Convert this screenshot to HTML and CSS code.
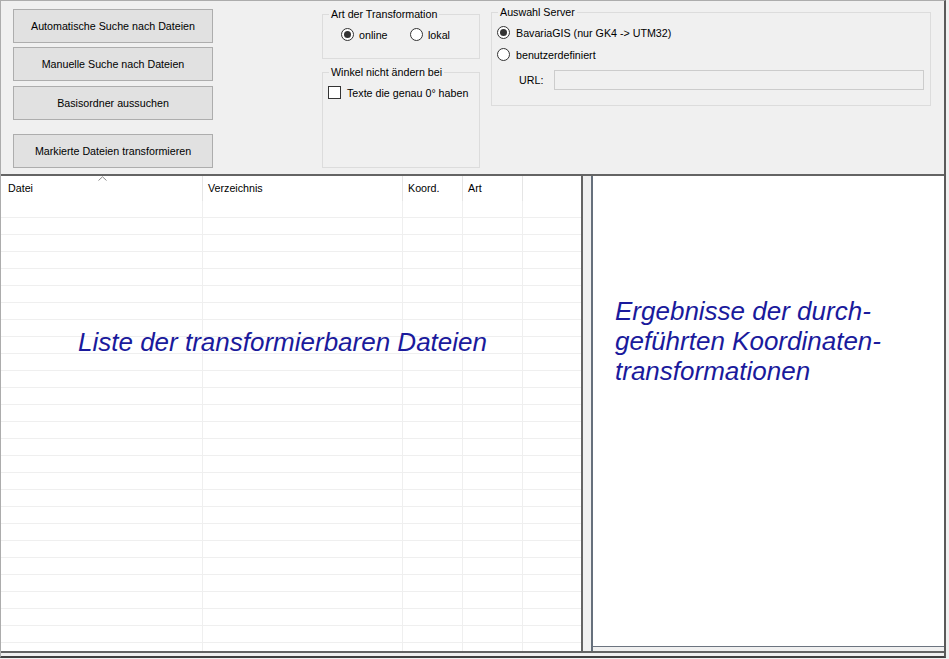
FILE: index.html
```html
<!DOCTYPE html>
<html lang="de">
<head>
<meta charset="utf-8">
<title>Koordinatentransformation</title>
<link rel="stylesheet" href="styles.css">
</head>
<body>
<div class="window">
  <div class="toolbar">
    <div class="buttons">
      <button class="btn">Automatische Suche nach Dateien</button>
      <button class="btn">Manuelle Suche nach Dateien</button>
      <button class="btn">Basisordner aussuchen</button>
      <button class="btn btn-gap">Markierte Dateien transformieren</button>
    </div>
    <div class="middle">
      <fieldset class="group group-art">
        <legend>Art der Transformation</legend>
        <div class="radio-row art-row">
          <span class="opt opt-online"><span class="radio checked"></span><span>online</span></span>
          <span class="opt"><span class="radio"></span><span>lokal</span></span>
        </div>
      </fieldset>
      <fieldset class="group group-winkel">
        <legend>Winkel nicht ändern bei</legend>
        <div class="check-row">
          <span class="checkbox"></span><span>Texte die genau 0° haben</span>
        </div>
      </fieldset>
    </div>
    <fieldset class="group group-server">
      <legend>Auswahl Server</legend>
      <div class="server-row first"><span class="radio checked"></span><span>BavariaGIS (nur GK4 -&gt; UTM32)</span></div>
      <div class="server-row second"><span class="radio"></span><span>benutzerdefiniert</span></div>
      <div class="url-row"><span class="url-label">URL:</span><span class="url-box"></span></div>
    </fieldset>
  </div>

  <div class="main">
    <div class="list">
      <div class="list-head">
        <div class="cell c1">Datei<svg class="sort" width="9" height="5" viewBox="0 0 9 5"><polyline points="0.5,4.5 4.5,0.8 8.5,4.5" fill="none" stroke="#8a8a8a" stroke-width="1"/></svg></div>
        <div class="cell c2">Verzeichnis</div>
        <div class="cell c3">Koord.</div>
        <div class="cell c4">Art</div>
        <div class="cell c5"></div>
      </div>
      <div class="list-body">
        <div class="row"><div class="cell c1"></div><div class="cell c2"></div><div class="cell c3"></div><div class="cell c4"></div><div class="cell c5"></div></div>
        <div class="row"><div class="cell c1"></div><div class="cell c2"></div><div class="cell c3"></div><div class="cell c4"></div><div class="cell c5"></div></div>
        <div class="row"><div class="cell c1"></div><div class="cell c2"></div><div class="cell c3"></div><div class="cell c4"></div><div class="cell c5"></div></div>
        <div class="row"><div class="cell c1"></div><div class="cell c2"></div><div class="cell c3"></div><div class="cell c4"></div><div class="cell c5"></div></div>
        <div class="row"><div class="cell c1"></div><div class="cell c2"></div><div class="cell c3"></div><div class="cell c4"></div><div class="cell c5"></div></div>
        <div class="row"><div class="cell c1"></div><div class="cell c2"></div><div class="cell c3"></div><div class="cell c4"></div><div class="cell c5"></div></div>
        <div class="row"><div class="cell c1"></div><div class="cell c2"></div><div class="cell c3"></div><div class="cell c4"></div><div class="cell c5"></div></div>
        <div class="row"><div class="cell c1"></div><div class="cell c2"></div><div class="cell c3"></div><div class="cell c4"></div><div class="cell c5"></div></div>
        <div class="row"><div class="cell c1"></div><div class="cell c2"></div><div class="cell c3"></div><div class="cell c4"></div><div class="cell c5"></div></div>
        <div class="row"><div class="cell c1"></div><div class="cell c2"></div><div class="cell c3"></div><div class="cell c4"></div><div class="cell c5"></div></div>
        <div class="row"><div class="cell c1"></div><div class="cell c2"></div><div class="cell c3"></div><div class="cell c4"></div><div class="cell c5"></div></div>
        <div class="row"><div class="cell c1"></div><div class="cell c2"></div><div class="cell c3"></div><div class="cell c4"></div><div class="cell c5"></div></div>
        <div class="row"><div class="cell c1"></div><div class="cell c2"></div><div class="cell c3"></div><div class="cell c4"></div><div class="cell c5"></div></div>
        <div class="row"><div class="cell c1"></div><div class="cell c2"></div><div class="cell c3"></div><div class="cell c4"></div><div class="cell c5"></div></div>
        <div class="row"><div class="cell c1"></div><div class="cell c2"></div><div class="cell c3"></div><div class="cell c4"></div><div class="cell c5"></div></div>
        <div class="row"><div class="cell c1"></div><div class="cell c2"></div><div class="cell c3"></div><div class="cell c4"></div><div class="cell c5"></div></div>
        <div class="row"><div class="cell c1"></div><div class="cell c2"></div><div class="cell c3"></div><div class="cell c4"></div><div class="cell c5"></div></div>
        <div class="row"><div class="cell c1"></div><div class="cell c2"></div><div class="cell c3"></div><div class="cell c4"></div><div class="cell c5"></div></div>
        <div class="row"><div class="cell c1"></div><div class="cell c2"></div><div class="cell c3"></div><div class="cell c4"></div><div class="cell c5"></div></div>
        <div class="row"><div class="cell c1"></div><div class="cell c2"></div><div class="cell c3"></div><div class="cell c4"></div><div class="cell c5"></div></div>
        <div class="row"><div class="cell c1"></div><div class="cell c2"></div><div class="cell c3"></div><div class="cell c4"></div><div class="cell c5"></div></div>
        <div class="row"><div class="cell c1"></div><div class="cell c2"></div><div class="cell c3"></div><div class="cell c4"></div><div class="cell c5"></div></div>
        <div class="row"><div class="cell c1"></div><div class="cell c2"></div><div class="cell c3"></div><div class="cell c4"></div><div class="cell c5"></div></div>
        <div class="row"><div class="cell c1"></div><div class="cell c2"></div><div class="cell c3"></div><div class="cell c4"></div><div class="cell c5"></div></div>
        <div class="row"><div class="cell c1"></div><div class="cell c2"></div><div class="cell c3"></div><div class="cell c4"></div><div class="cell c5"></div></div>
        <div class="row"><div class="cell c1"></div><div class="cell c2"></div><div class="cell c3"></div><div class="cell c4"></div><div class="cell c5"></div></div>
        <div class="row"><div class="cell c1"></div><div class="cell c2"></div><div class="cell c3"></div><div class="cell c4"></div><div class="cell c5"></div></div>
      </div>
      <div class="list-label">Liste der transformierbaren Dateien</div>
    </div>
    <div class="result">
      <div class="result-area">
        <div class="result-text">Ergebnisse der durch-<br>geführten Koordinaten-<br>transformationen</div>
      </div>
      <div class="result-foot"></div>
    </div>
  </div>
</div>
</body>
</html>
```

FILE: styles.css
```css
html, body {
  margin: 0;
  padding: 0;
}
body {
  width: 949px;
  height: 659px;
  overflow: hidden;
  background: #f0f0f0;
  font-family: "Liberation Sans", Arial, sans-serif;
  font-size: 10.7px;
  color: #000;
}
.window {
  box-sizing: border-box;
  width: 946px;
  height: 658px;
  border-top: 1px solid #acacac;
  border-left: 1px solid #acacac;
  border-right: 2px solid #5a5a5a;
  border-bottom: 2px solid #404040;
  background: #f0f0f0;
  display: flex;
  flex-direction: column;
}

/* ---------- top area ---------- */
.toolbar {
  height: 173px;
  display: flex;
  align-items: flex-start;
}
.buttons {
  margin-left: 12px;
  margin-top: 8px;
  width: 200px;
  display: flex;
  flex-direction: column;
}
.btn {
  box-sizing: border-box;
  width: 200px;
  height: 34px;
  margin: 0 0 4px 0;
  padding: 0;
  border: 1px solid #adadad;
  background: #e1e1e1;
  font-family: "Liberation Sans", Arial, sans-serif;
  font-size: 10.7px;
  color: #000;
  text-align: center;
}
.btn:nth-child(3) { margin-top: 1px; }
.btn-gap { margin-top: 10px; }

.middle {
  margin-left: 109px;
  margin-top: 7px;
  width: 158px;
  display: flex;
  flex-direction: column;
}
.group {
  box-sizing: border-box;
  margin: 0;
  padding: 0;
  min-width: 0;
  border: 1px solid #dcdcdc;
}
.group legend {
  margin-left: 6px;
  padding: 0 2px;
  font-size: 10.7px;
  line-height: 13px;
}
.group-art {
  width: 158px;
  height: 51px;
}
.group-winkel {
  width: 158px;
  height: 102px;
  margin-top: 7px;
}
.group-server {
  margin-left: 11px;
  margin-top: 5px;
  width: 440px;
  height: 100px;
}

.radio {
  box-sizing: border-box;
  flex: none;
  width: 13px;
  height: 13px;
  border: 1px solid #333;
  border-radius: 50%;
  background: #fff;
  display: flex;
  align-items: center;
  justify-content: center;
}
.radio.checked::after {
  content: "";
  width: 7px;
  height: 7px;
  border-radius: 50%;
  background: #333;
}
.checkbox {
  box-sizing: border-box;
  flex: none;
  width: 13px;
  height: 13px;
  border: 1px solid #333;
  background: #fff;
}

.art-row {
  margin-top: 7px;
  padding-left: 18px;
  display: flex;
  align-items: center;
  height: 13px;
}
.opt {
  display: inline-flex;
  align-items: center;
  gap: 5px;
}
.opt-online { width: 69px; }

.check-row {
  margin-top: 7px;
  padding-left: 5px;
  display: flex;
  align-items: center;
  gap: 6px;
  height: 13px;
}

.server-row {
  padding-left: 5px;
  display: flex;
  align-items: center;
  gap: 6px;
  height: 13px;
}
.server-row.first { margin-top: 7px; }
.server-row.second { margin-top: 9px; }
.url-row {
  margin-top: 9px;
  padding-left: 27px;
  display: flex;
  align-items: center;
  height: 20px;
}
.url-label {
  width: 35px;
}
.url-box {
  box-sizing: border-box;
  width: 370px;
  height: 20px;
  border: 1px solid #cccccc;
  background: #f0f0f0;
}

/* ---------- main area ---------- */
.main {
  height: 475px;
  border-top: 2px solid #646464;
  border-bottom: 2px solid #646464;
  display: flex;
  margin-bottom: 3px;
}
.list {
  position: relative;
  box-sizing: border-box;
  width: 582px;
  height: 475px;
  border-right: 2px solid #646464;
  background: #fff;
  overflow: hidden;
}
.list-head {
  display: flex;
  height: 25px;
  background: #fff;
}
.list-head .cell {
  height: 25px;
  line-height: 25px;
  border-right: 1px solid #e5e5e5;
  padding-left: 5px;
  box-sizing: border-box;
  white-space: nowrap;
}
.list-head .c1 {
  position: relative;
  padding-left: 7px;
}
.list-head .c5 { border-right: none; }
.sort {
  position: absolute;
  left: 97px;
  top: 0px;
}
.row {
  display: flex;
  height: 17px;
  box-sizing: border-box;
  border-bottom: 1px solid #efefef;
}
.cell {
  box-sizing: border-box;
  height: 100%;
  border-right: 1px solid #efefef;
}
.c1 { width: 202px; }
.c2 { width: 200px; }
.c3 { width: 60px; }
.c4 { width: 60px; }
.c5 { flex: 1; border-right: none; }

.list-label {
  position: absolute;
  left: 77px;
  top: 151px;
  font-style: italic;
  font-size: 26px;
  line-height: 30px;
  color: #1a1a9c;
  white-space: nowrap;
}

.result {
  margin-left: 8px;
  box-sizing: border-box;
  width: 353px;
  height: 475px;
  border-left: 2px solid #66707c;
  display: flex;
  flex-direction: column;
}
.result-area {
  background: #fff;
  border-bottom: 1px solid #6c7480;
  box-sizing: border-box;
  height: 471px;
  padding: 120px 0 0 22px;
}
.result-text {
  font-style: italic;
  font-size: 26px;
  line-height: 30px;
  color: #1a1a9c;
  white-space: nowrap;
}
.result-foot {
  flex: 1;
  background: #f0f0f0;
}
```
